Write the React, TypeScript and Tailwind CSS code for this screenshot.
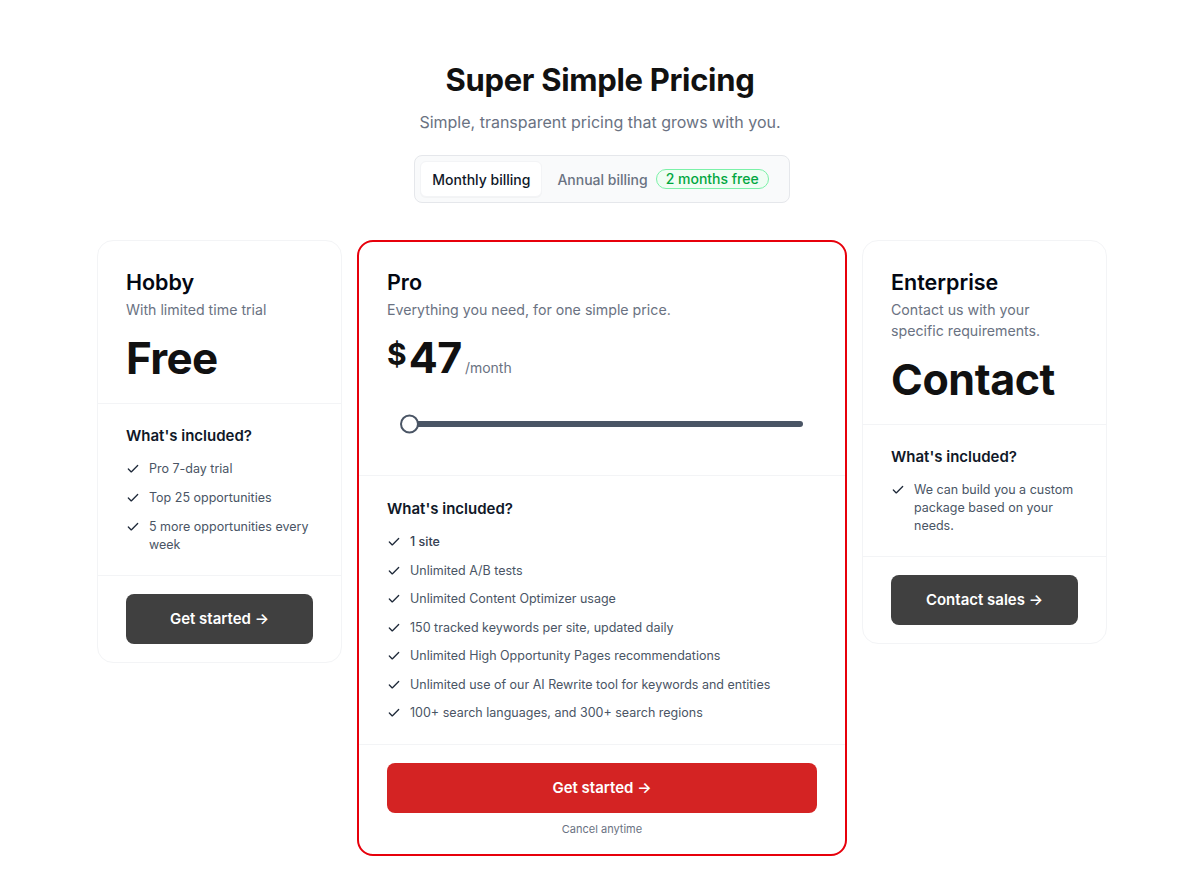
import React from 'react';
import { Check } from 'lucide-react';

const font = { fontFamily: 'Inter, "Noto Sans", sans-serif' };

const Feature = ({ text, strong = false }: { text: string; strong?: boolean }) => (
  <li className="flex items-start gap-[9px]">
    <Check className="mt-[2px] h-[14px] w-[14px] shrink-0 text-gray-800" strokeWidth={2.25} />
    <span className={`text-[12.5px] leading-[18px] text-gray-600 ${strong ? 'font-medium text-gray-700' : ''}`}>{text}</span>
  </li>
);

const Included = ({ items, gap = 'gap-[11px]' }: { items: string[]; gap?: string }) => (
  <div>
    <h4 className="text-[15px] font-semibold leading-[22px] text-gray-900">What's included?</h4>
    <ul className={`mt-[13px] flex flex-col ${gap}`}>
      {items.map((t, i) => (
        <Feature key={t} text={t} strong={i === 0 && t === '1 site'} />
      ))}
    </ul>
  </div>
);

export default function App() {
  const proItems = [
    '1 site',
    'Unlimited A/B tests',
    'Unlimited Content Optimizer usage',
    '150 tracked keywords per site, updated daily',
    'Unlimited High Opportunity Pages recommendations',
    'Unlimited use of our AI Rewrite tool for keywords and entities',
    '100+ search languages, and 300+ search regions',
  ];

  return (
    <div className="min-h-screen bg-white pb-10" style={font}>
      <div className="flex flex-col items-center pt-[60px]">
        <h1 className="text-[31px] font-bold leading-[40px] tracking-[-0.01em] text-[#111111]">Super Simple Pricing</h1>
        <p className="mt-[10px] text-[16px] leading-[24px] text-gray-500">Simple, transparent pricing that grows with you.</p>

        {/* billing toggle */}
        <div className="ml-[4px] mt-[21px] flex items-center rounded-lg border border-gray-200 bg-gray-50 p-[5px]">
          <button className="h-[36px] rounded-md border border-gray-100 bg-white px-[11px] text-[14px] font-medium text-gray-900 shadow-[0_1px_1px_rgba(0,0,0,0.03)]">
            Monthly billing
          </button>
          <div className="flex items-center gap-[8px] pl-[15px] pr-[15px] text-[14px] font-medium text-gray-500">
            <span>Annual billing</span>
            <span className="rounded-full border border-green-300 bg-green-50 px-[9px] text-[14px] leading-[18px] text-green-600">2 months free</span>
          </div>
        </div>

        {/* plans */}
        <div className="mt-[37px] grid grid-cols-[245px_490px_245px] items-start gap-[15px] pl-[4px]">
          {/* Hobby */}
          <div className="rounded-2xl border border-gray-100 bg-white">
            <div className="px-[28px] pb-[21px] pt-[27px]">
              <h3 className="text-[21.5px] font-semibold leading-[28px] text-gray-950">Hobby</h3>
              <p className="mt-[3px] text-[14.2px] leading-[21px] text-gray-500">With limited time trial</p>
              <div className="mt-[14px] text-[44px] font-bold leading-[48px] tracking-[-0.015em] text-[#111111]">Free</div>
            </div>
            <div className="border-t border-gray-100 px-[28px] pb-[21px] pt-[21px]">
              <Included items={['Pro 7-day trial', 'Top 25 opportunities', '5 more opportunities every week']} />
            </div>
            <div className="border-t border-gray-100 px-[28px] pb-[18px] pt-[18px]">
              <button className="h-[50px] w-full rounded-lg bg-neutral-700 text-[15px] font-semibold text-white">Get started →</button>
            </div>
          </div>

          {/* Pro */}
          <div className="rounded-2xl border-2 border-red-600 bg-white">
            <div className="px-[28px] pb-[48px] pt-[26px]">
              <h3 className="text-[21.5px] font-semibold leading-[28px] text-gray-950">Pro</h3>
              <p className="mt-[3px] text-[14.2px] leading-[21px] text-gray-500">Everything you need, for one simple price.</p>
              <div className="mt-[13px] flex items-baseline">
                <span className="self-start pt-[4px] text-[30px] font-bold leading-[34px] text-[#111111]">$</span>
                <span className="ml-[2px] text-[43px] font-bold leading-[48px] tracking-[-0.01em] text-[#111111]">47</span>
                <span className="ml-[3px] text-[14px] text-gray-500">/month</span>
              </div>
              <div className="mt-[40px] px-[14px]">
                <div className="relative h-[6px] rounded-full bg-gray-600">
                  <div className="absolute left-[-1px] top-1/2 h-[19px] w-[19px] -translate-y-1/2 rounded-full border-2 border-gray-600 bg-white" />
                </div>
              </div>
            </div>
            <div className="border-t border-gray-100 px-[28px] pb-[22px] pt-[22px]">
              <Included items={proItems} gap="gap-[10.5px]" />
            </div>
            <div className="border-t border-gray-100 px-[28px] pb-[18px] pt-[18px]">
              <button className="h-[50px] w-full rounded-lg bg-[#d42323] text-[15px] font-semibold text-white">Get started →</button>
              <p className="mt-[9px] text-center text-[11px] leading-[14px] text-gray-500">Cancel anytime</p>
            </div>
          </div>

          {/* Enterprise */}
          <div className="rounded-2xl border border-gray-100 bg-white">
            <div className="px-[28px] pb-[21px] pt-[27px]">
              <h3 className="text-[21.5px] font-semibold leading-[28px] text-gray-950">Enterprise</h3>
              <p className="mt-[3px] text-[14.2px] leading-[21px] text-gray-500">Contact us with your specific requirements.</p>
              <div className="mt-[14px] text-[43px] font-bold leading-[48px] tracking-[-0.01em] text-[#111111]">Contact</div>
            </div>
            <div className="border-t border-gray-100 px-[28px] pb-[21px] pt-[21px]">
              <Included items={['We can build you a custom package based on your needs.']} />
            </div>
            <div className="border-t border-gray-100 px-[28px] pb-[18px] pt-[18px]">
              <button className="h-[50px] w-full rounded-lg bg-neutral-700 text-[15px] font-semibold text-white">Contact sales →</button>
            </div>
          </div>
        </div>
      </div>
    </div>
  );
}
